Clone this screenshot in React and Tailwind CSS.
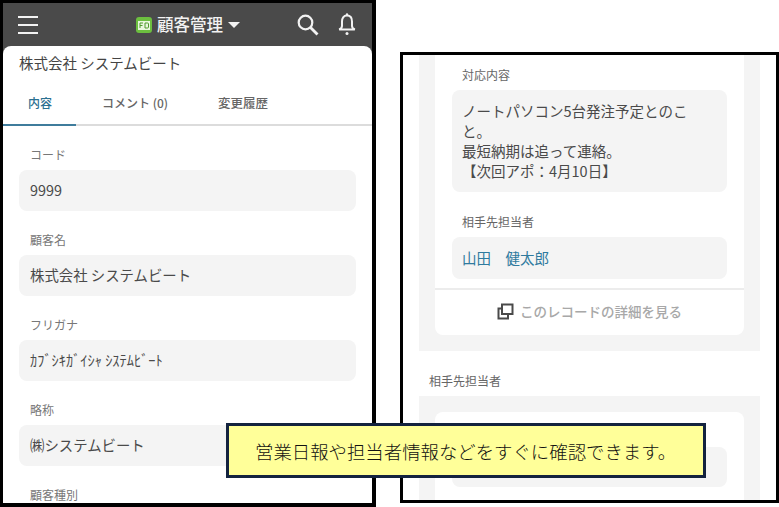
import React from 'react';

const FONT = "font-['Noto_Sans_CJK_JP','Noto_Sans_CJK_SC',sans-serif]";

const Field = ({ label, value }) => (
    <div className="flex flex-col">
        <div className="h-[30px] pl-[11px] pt-[6px] text-[12px] leading-[18px] text-[#777]">{label}</div>
        <div className="h-[41px] flex items-center bg-[#f4f4f4] rounded-lg pl-[11px] pb-[1px] text-[14.4px] text-[#4a4a4a]">
            {value}
        </div>
    </div>
);

const Logo = () => (
    <svg width="16" height="16" viewBox="0 0 16 16">
        <rect x="0" y="0" width="16" height="16" rx="3" fill="#6cbf3f" />
        <rect x="2" y="4" width="12" height="9" fill="#e9f6dd" />
        <path d="M4 6h3M4 6v5M4 8.5h2.5M9 6v5h2.5a1 1 0 0 0 1-1V7a1 1 0 0 0-1-1H9" stroke="#4f9a2c" strokeWidth="1" fill="none" />
    </svg>
);

const SearchIcon = () => (
    <svg width="22" height="22" viewBox="0 0 22 22" fill="none" stroke="#f2f2f2" strokeWidth="2.2">
        <circle cx="8.5" cy="8.5" r="6.8" />
        <path d="M13.5 13.5l7 7" strokeWidth="2.8" />
    </svg>
);

const Bell = () => (
    <svg width="20" height="23" viewBox="0 0 20 23" fill="none" stroke="#f2f2f2" strokeWidth="2">
        <path d="M10 2.5c-3.6 0-5 2.8-5 6v4.5c0 1.4-1 2.6-2.8 3.5h15.6c-1.8-.9-2.8-2.1-2.8-3.5V8.500c0-3.200-1.400-6-5-6z" />
        <circle cx="10" cy="20.500" r="1.500" fill="#f2f2f2" stroke="none" />
        <circle cx="10" cy="1.500" r="1.200" fill="#f2f2f2" stroke="none" />
    </svg>
);

const CopyIcon = () => (
    <svg width="17" height="17" viewBox="0 0 17 17" fill="none" stroke="#4a4a4a" strokeWidth="2">
        <rect x="5" y="1.5" width="10.5" height="9.5" />
        <path d="M5 5.5H1.5v10H11V11" />
    </svg>
);

const LeftPhone = () => (
    <div className="w-[376px] h-[507px] shrink-0 border-[3px] border-r-[4px] border-b-[4px] border-black bg-[#4a4a4a] overflow-hidden flex flex-col">
        <header className="h-[43px] shrink-0 flex items-center text-[#f2f2f2]">
            <div className="w-[20px] ml-[15px] flex flex-col gap-[6px]">
                <span className="h-[2px] bg-[#f2f2f2]" />
                <span className="h-[2px] bg-[#f2f2f2]" />
                <span className="h-[2px] bg-[#f2f2f2]" />
            </div>
            <div className="ml-[98px] flex items-center gap-[5px]">
                <Logo />
                <span className="text-[16.5px] leading-none font-medium">顧客管理</span>
                <span className="w-0 h-0 border-x-[6px] border-x-transparent border-t-[6px] border-t-[#f2f2f2]" />
            </div>
            <div className="ml-[57px]"><SearchIcon /></div>
            <div className="ml-[18px]"><Bell /></div>
        </header>
        <div className="flex-1 bg-white rounded-t-lg overflow-hidden flex flex-col">
            <div className="h-[36px] shrink-0 pl-[16px] pt-[5px] text-[14.5px] leading-[24px] text-[#444]">株式会社 システムビート</div>
            <nav className="h-[44px] shrink-0 flex items-stretch border-b-[2px] border-[#dcdcdc] text-[12px]">
                <div className="w-[73px] -mb-[2px] pl-[25px] pt-[12px] font-medium text-[#2b7091] border-b-[2px] border-[#3f7c9c]">内容</div>
                <div className="ml-[26px] pt-[12px] text-[#666] font-medium">コメント (0)</div>
                <div className="ml-[50px] pt-[12px] text-[12.5px] text-[#666] font-medium">変更履歴</div>
            </nav>
            <div className="px-[16px] pt-[14px] flex flex-col gap-[14px]">
                <Field label="コード" value="9999" />
                <Field label="顧客名" value="株式会社 システムビート" />
                <Field label="フリガナ" value="ｶﾌﾞｼｷｶﾞｲｼｬ ｼｽﾃﾑﾋﾞｰﾄ" />
                <Field label="略称" value="㈱システムビート" />
                <Field label="顧客種別" value="" />
            </div>
        </div>
    </div>
);

const RightPhone = () => (
    <div className="w-[379px] h-[451px] mt-[52px] ml-[24px] shrink-0 border-[3px] border-black bg-white overflow-hidden">
        <div className="mx-[16px] bg-[#f4f4f4] h-[296px] px-[16px]">
            <div className="bg-white rounded-b-lg h-[280px] px-[17px]">
                <div className="h-[35px] pl-[10px] pt-[11px] text-[12px] leading-[18px] text-[#666]">対応内容</div>
                <div className="h-[102px] bg-[#f4f4f4] rounded-lg pl-[10px] pt-[11px] text-[14.5px] leading-[20px] text-[#4a4a4a]">
                    <p>ノートパソコン5台発注予定とのこ</p>
                    <p>と。</p>
                    <p>最短納期は追って連絡。</p>
                    <p>【次回アポ：4月10日】</p>
                </div>
                <div className="h-[45px] pl-[10px] pt-[21px] text-[12px] leading-[18px] text-[#666]">相手先担当者</div>
                <div className="h-[42px] bg-[#f4f4f4] rounded-lg flex items-center pl-[10px] pb-[1px] text-[14.5px] text-[#2f7a9e]">山田　健太郎</div>
                <div className="-mx-[17px] mt-[9px] h-[47px] border-t-[2px] border-[#ececec] flex items-center justify-center gap-[6px] pb-[2px] text-[13.5px] font-medium text-[#a8a8a8]">
                    <CopyIcon />
                    <span>このレコードの詳細を見る</span>
                </div>
            </div>
        </div>
        <div className="h-[45px] pl-[26px] pt-[21px] text-[12px] leading-[18px] text-[#666]">相手先担当者</div>
        <div className="mx-[16px] bg-[#f4f4f4] h-[120px] px-[16px] pt-[16px]">
            <div className="bg-white rounded-t-lg h-[104px] px-[17px] pt-[35px]">
                <div className="h-[40px] bg-[#f4f4f4] rounded-lg" />
            </div>
        </div>
    </div>
);

export default function App() {
    return (
        <div className={`relative w-[779px] h-[507px] overflow-hidden bg-white flex ${FONT}`}>
            <LeftPhone />
            <RightPhone />
            <div className="absolute left-[226px] top-[423px] w-[480px] h-[55px] border-[3px] border-[#14233f] bg-[#ffff99] flex items-center pl-[26px] pt-[2px] text-[18.4px] font-light text-[#111] whitespace-nowrap">
                営業日報や担当者情報などをすぐに確認できます。
            </div>
        </div>
    );
}
